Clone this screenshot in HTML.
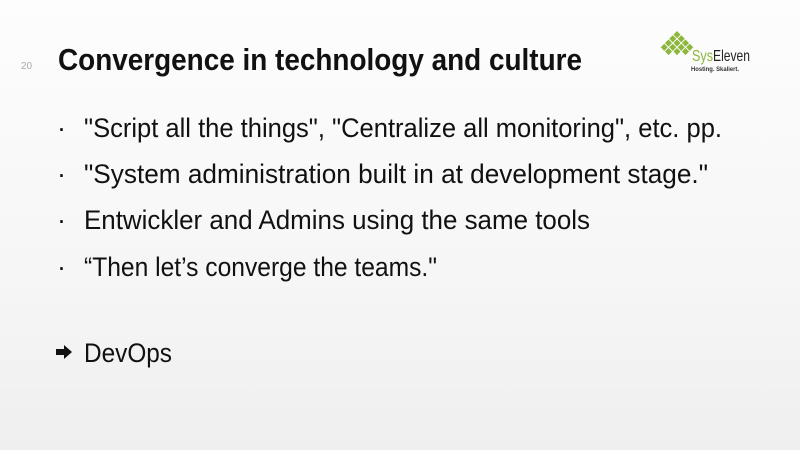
<!DOCTYPE html>
<html><head><meta charset="utf-8"><style>
body{margin:0;width:800px;height:450px;overflow:hidden;background:linear-gradient(180deg,#fdfdfd 0%,#f6f6f6 60%,#efefef 100%);}
svg{display:block}
</style></head><body>
<svg width="800" height="450" xmlns="http://www.w3.org/2000/svg" font-family="Liberation Sans, sans-serif">
<text x="21" y="69" font-size="10" fill="#aaa">20</text>
<text x="58" y="70" font-size="31" font-weight="bold" fill="#111" textLength="524" lengthAdjust="spacingAndGlyphs">Convergence in technology and culture</text>
<g fill="#8cb63c">
<g transform="translate(677,48) rotate(45)">
<rect x="-12" y="-12" width="5" height="5"/><rect x="-6" y="-12" width="5" height="5"/><rect x="0" y="-12" width="5" height="5"/><rect x="6" y="-12" width="5" height="5"/>
<rect x="-12" y="-6" width="5" height="5"/><rect x="-6" y="-6" width="5" height="5"/><rect x="0" y="-6" width="5" height="5"/><rect x="6" y="-6" width="5" height="5"/>
<rect x="-12" y="0" width="5" height="5"/><rect x="-6" y="0" width="5" height="5"/><rect x="0" y="0" width="5" height="5"/>
<rect x="-12" y="6" width="5" height="5"/><rect x="-6" y="6" width="5" height="5"/>
</g>
</g>
<text x="692" y="61" font-size="16" fill="#8cb63c" textLength="21" lengthAdjust="spacingAndGlyphs">Sys</text>
<text x="713" y="61" font-size="16" fill="#222" textLength="37" lengthAdjust="spacingAndGlyphs">Eleven</text>
<text x="691" y="71" font-size="6.5" font-weight="bold" fill="#333" textLength="48" lengthAdjust="spacingAndGlyphs">Hosting. Skaliert.</text>
<g font-size="27" fill="#111">
<text x="57" y="137">·</text>
<text x="84" y="137" textLength="638" lengthAdjust="spacingAndGlyphs">"Script all the things", "Centralize all monitoring", etc. pp.</text>
<text x="57" y="183">·</text>
<text x="84" y="183" textLength="624" lengthAdjust="spacingAndGlyphs">"System administration built in at development stage."</text>
<text x="57" y="229">·</text>
<text x="84" y="229" textLength="506" lengthAdjust="spacingAndGlyphs">Entwickler and Admins using the same tools</text>
<text x="57" y="276">·</text>
<text x="84" y="276" textLength="353" lengthAdjust="spacingAndGlyphs">“Then let’s converge the teams."</text>
<text x="84" y="362" textLength="88" lengthAdjust="spacingAndGlyphs">DevOps</text>
</g>
<path d="M56 349h8v-4l8 7-8 7v-4h-8z" fill="#111"/>
</svg>
</body></html>
